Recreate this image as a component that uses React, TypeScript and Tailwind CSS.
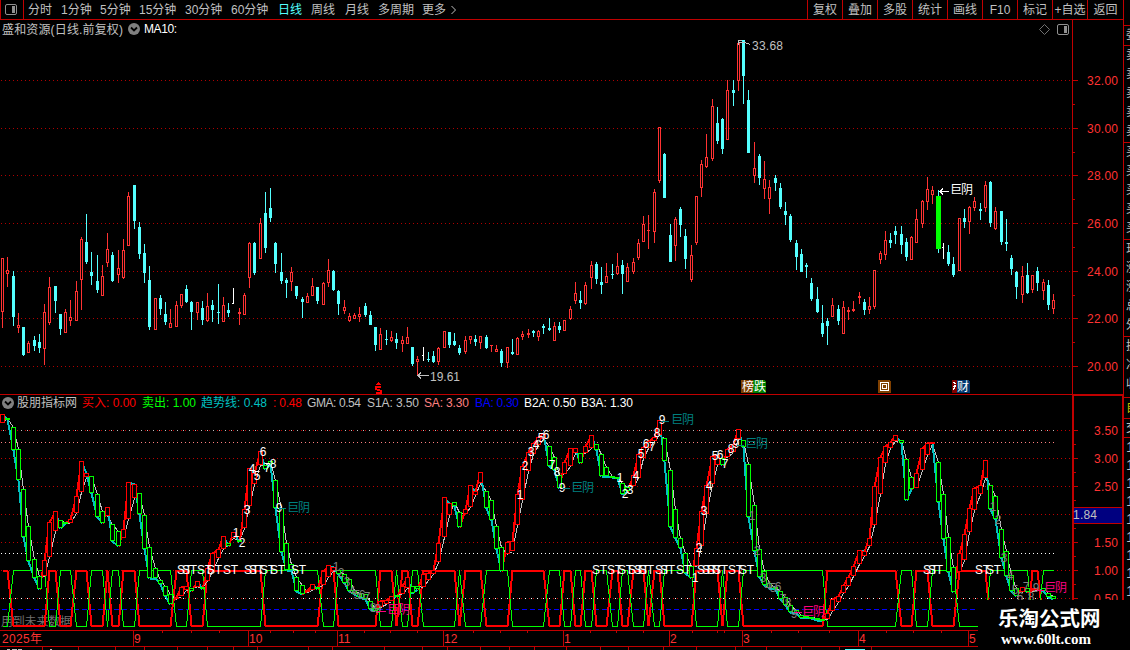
import { Fragment } from 'react';

type Candle = [high: number, top: number, bottom: number, low: number];
type Bar = [kind: 'r' | 'g', top: number, bottom: number];

const STEP = 5.2549;
const px = (i: number) => Math.floor(2.639 + i * STEP);

// Daily candles: kind, high, body top, body bottom, low (screen y)
const candleData = `
r258,258,312,328 r257,270,274,287 c271,276,317,326 r313,325,328,333 c327,327,355,356 r341,343,353,353
c336,340,346,351 c334,342,348,353 r304,312,349,365 r277,287,323,325 c286,286,301,313 c314,314,329,335
r309,312,333,333 r300,317,321,326 r281,291,321,321 r237,239,280,310 c214,242,262,264 c252,272,276,285
c255,281,290,293 r265,276,296,296 r233,249,263,267 c252,255,281,282 r250,268,275,283 r239,250,278,279
r192,196,246,246 c185,185,221,229 c222,227,254,259 c244,253,273,283 c266,280,327,330 r298,298,330,330
c295,298,309,315 c302,314,322,325 r309,323,328,328 r301,305,327,327 r294,294,306,308 c285,289,302,303
c301,302,312,330 r302,302,313,320 c301,308,320,325 r293,306,321,322 c300,305,310,322 c284,312,313,324
r297,305,322,322 c303,310,313,317 w288,303,304,304 r308,312,314,325 r293,295,315,315 r242,243,278,288
c242,243,273,275 r218,223,259,259 c192,213,248,253 c188,208,218,222 c242,243,264,273 c253,272,281,284
c278,280,283,298 r267,272,282,291 c286,286,296,299 c297,299,302,318 r293,296,303,303 r278,286,296,296
c287,287,301,304 r282,283,305,305 r259,270,283,287 c270,271,290,291 c290,291,304,315 r300,307,311,314
r313,316,321,322 r313,315,319,319 r307,314,317,322 c303,306,315,317 c311,315,325,325 c327,327,345,351
r328,334,350,350 c330,339,340,345 r331,337,341,342 c333,339,343,349 r336,340,344,352 r327,337,344,344
c347,347,364,366 r356,359,362,375 w347,355,356,361 c352,359,360,362 c351,356,362,363 r347,348,362,365
r331,331,348,348 c332,332,345,348 c333,341,345,346 c345,348,353,355 r336,340,352,354 r336,336,340,344
c335,339,342,346 r336,336,343,349 c335,337,348,349 r345,345,346,352 r345,349,352,352 c349,351,363,367
r347,347,363,368 c339,352,354,355 r337,338,355,355 r331,334,337,340 r329,333,335,338 c330,331,333,337
r330,331,337,341 c324,326,328,334 c318,328,330,331 r322,326,341,341 c322,326,330,333 r320,320,331,331
r306,309,319,320 r282,293,301,304 c291,300,303,309 r282,285,304,305 r261,265,278,289 c262,264,279,284
c267,282,285,294 r263,276,283,283 c264,274,275,279 r253,266,274,275 c260,265,274,294 r263,267,282,282
r258,262,272,274 r239,243,258,260 r216,224,242,242 r215,230,231,249 r189,192,232,243 r127,127,181,183
c153,154,198,198 c224,235,262,262 r217,219,246,261 c207,209,225,237 c229,236,259,269 r245,255,280,282
r196,196,243,245 r160,164,188,197 r134,157,167,168 r99,106,159,161 c107,123,141,144 c118,119,149,154
r80,90,140,140 c80,90,93,106 r42,43,81,91 c40,40,76,104 c90,100,153,153 r142,168,176,183
c154,156,178,185 r161,179,189,199 r180,187,199,214 c175,178,183,191 c183,188,207,209 c202,211,215,225
c214,216,240,242 c240,243,257,270 c249,254,272,272 c263,265,267,278 c278,283,299,301 c287,299,312,313
c305,323,334,337 c318,321,326,345 r298,305,317,317 c305,309,321,325 r301,307,334,334 r307,310,312,320
r301,309,311,312 r292,296,298,304 c299,302,310,315 r297,306,310,314 r270,270,307,309 r251,253,260,264
r231,240,255,260 c233,240,243,248 c226,231,235,244 c226,234,245,254 c238,242,257,261 r236,237,260,260
r209,219,243,243 r200,201,224,228 r177,189,202,210 r186,190,195,204 x190,196,249,253 w243,247,248,259
c245,252,264,266 c257,264,275,277 r218,218,271,271 c209,218,222,228 r206,207,222,234 r197,201,208,211
c203,209,211,220 r181,185,208,212 c181,182,223,227 r207,211,229,230 c211,211,242,245 c219,242,244,251
c255,258,269,275 c271,272,287,299 r266,276,295,303 c263,275,293,294 r275,275,290,293 c267,271,283,291
r279,282,291,300 c280,285,305,310 r294,300,309,314`;

const candles = candleData
    .trim()
    .split(/\s+/)
    .map((s) => ({ kind: s[0], v: s.slice(1).split(',').map(Number) as Candle }));

// Trend boxes: kind, top, bottom
const barData = `
r414,423 g418,419 g427,450 g449,480 g489,537 g526,561 g559,578 g576,589 r560,576 r522,557 r511,531 g520,528
g522,523 r519,523 r496,513 r461,492 r473,477 g476,493 g494,517 g511,523 r507,516 g524,541 g531,546 r529,538
r482,519 r484,498 g493,514 g515,549 g547,578 g568,578 g580,584 g586,596 g594,604 r597,599 r587,596 r586,590
g588,591 r581,587 g587,589 r568,581 r553,571 r549,558 r536,549 g543,546 r532,538 g540,542 r509,528 r468,506
r473,484 r451,465 g465,469 g461,464 g480,508 g508,552 g543,570 g564,570 g577,591 g585,594 r590,592 r584,590
g587,589 r571,585 r565,577 r567,571 g570,574 g574,583 g579,591 g590,594 g593,597 g594,599 g601,609 g608,611
r601,607 r600,604 r596,601 g595,597 r586,594 r577,588 g586,593 g586,589 r574,587 r573,580 r570,574 r543,562
r497,537 r503,515 g502,506 g512,527 r509,514 r485,507 r491,495 r472,483 g491,508 g500,520 g526,549 g547,571
r542,554 r541,551 r494,525 r466,500 r452,471 r443,454 r437,445 r434,439 g446,466 g457,470 g475,488 r462,474
r448,466 r448,453 g453,463 r446,453 r435,448 g444,450 g454,476 g467,476 g476,477 g477,478 g483,494 g487,491
r475,486 r454,478 r447,458 r441,448 r437,441 r420,435 g438,461 g470,527 g509,538 g538,548 g553,573 g566,578
r548,566 r511,546 r485,514 r456,484 r455,465 g458,465 r449,457 r444,452 r429,439 g440,447 g464,517 g505,551
g549,577 g571,585 g583,588 g587,589 g591,599 g597,605 g605,612 g610,613 g615,618 g616,617 g617,618 g618,620
g619,621 r613,619 r599,611 r596,602 r585,593 r577,586 r566,576 r550,564 r551,556 r538,546 r486,525 r457,494
r446,463 r442,448 r435,441 g440,443 g459,500 g477,489 r473,488 r448,470 r443,455 r442,444 g462,502 g494,539
g537,572 g567,592 r553,572 r534,560 r508,532 r488,510 r485,494 r460,478 g485,509 g496,519 g529,558 g551,576
g575,591 g588,596 r587,592 g588,592 r589,591 r588,590 g588,591 g593,597 g596,599`;

const bars = barData
    .trim()
    .split(/\s+/)
    .map((s) => [s[0], ...s.slice(1).split(',').map(Number)] as Bar);

const fast = bars.map(([k, t, b]) => (k === 'r' ? t : b));
const slow = bars.map(([k, t, b]) => (k === 'r' ? b : t));

// Index ranges in which the signal line is high
const highRanges = [
    [0, 1], [9, 10], [14, 16], [20, 20], [23, 25], [33, 35], [39, 49], [61, 63], [72, 74], [76, 77],
    [80, 86], [88, 91], [97, 103], [107, 108], [111, 112], [116, 117], [120, 122], [124, 125],
    [132, 136], [138, 140], [157, 170], [174, 176], [182, 187], [196, 197],
];
const isHigh = (i: number) => highRanges.some(([a, b]) => i >= a && i <= b);
const signal = (hi: number, lo: number) =>
    bars.map((_, i) => `${px(i) + 0.5},${isHigh(i) ? hi : lo}`).join(' ');

const priceTicks = [
    ['32.00', 80], ['30.00', 128], ['28.00', 175], ['26.00', 223], ['24.00', 271], ['22.00', 318], ['20.00', 366],
] as [string, number][];

const trendTicks = [
    ['3.50', 430], ['3.00', 458], ['2.50', 486], ['', 514], ['1.50', 542], ['1.00', 570], ['0.50', 598],
] as [string, number][];

// Counters: text, centre x, centre y
const whiteCounts = `1,236,532 2,242,542 3,247,509 4,252,468 5,257,475 6,263,451 7,267,467 8,273,463 9,279,507
1,520,494 2,525,465 3,531,451 4,536,444 5,541,437 6,546,434 7,552,464 8,557,471 9,562,487
1,620,477 2,625,493 3,630,489 4,636,475 5,641,453 6,646,443 7,652,446 8,657,432 9,662,419
1,695,577 2,699,547 3,704,510 4,709,485 5,715,455 6,720,454 7,725,463 8,731,448 9,736,443`;
const grayCounts = `1,336,566 2,341,572 3,347,581 4,352,590 5,357,594 6,362,594 7,367,596 8,373,607 9,378,608
1,752,515 2,757,550 3,763,577 4,768,585 5,773,587 6,778,586 7,783,598 8,788,602 9,794,613
1,993,506 2,998,519 3,1004,557 4,1010,575 5,1015,589 6,1020,596 7,1026,586 8,1031,596 9,1036,587`;

const stMarks = [
    177, 182, 197, 207, 223, 244, 249, 260, 270, 291, 592, 607, 618, 628, 634, 639, 655, 660, 676, 697, 702,
    707, 713, 728, 739, 923, 928, 975, 986,
];

const periods = [
    ['分时', 'w-[33px]'], ['1分钟', 'w-[39px]'], ['5分钟', 'w-[39px]'], ['15分钟', 'w-[46px]'],
    ['30分钟', 'w-[46px]'], ['60分钟', 'w-[47px]'], ['日线', 'w-[33px] text-[#54ffff]'], ['周线', 'w-[34px]'],
    ['月线', 'w-[33px]'], ['多周期', 'w-[44px]'], ['更多', 'w-[28px]'],
];

const actions = ['复权', '叠加', '多股', '统计', '画线', 'F10', '标记', '+自选', '返回'];

const readings = [
    ['买入: 0.00', 'w-[60px] text-[#ff0000]', 54],
    ['卖出: 1.00', 'w-[59px] text-[#00ff00]', 54],
    ['趋势线: 0.48', 'w-[72px] text-[#00c0c0]', 66],
    [': 0.48', 'w-[34px] text-[#ff0000]', 29],
    ['GMA: 0.54', 'w-[60px] text-[#c0c0c0]', 54],
    ['S1A: 3.50', 'w-[57px] text-[#c0c0c0]', 52],
    ['SA: 3.30', 'w-[51px] text-[#ff8080]', 45],
    ['BA: 0.30', 'w-[49px] text-[#0000ff]', 44],
    ['B2A: 0.50', 'w-[57px] text-white', 52],
    ['B3A: 1.30', 'w-[57px] text-white', 52],
] as [string, string, number][];

const months = [
    ['9', 133], ['10', 248], ['11', 337], ['12', 443], ['1', 563], ['2', 669], ['3', 742], ['4', 858], ['5', 968],
] as [string, number][];
const minorTicks = [162, 191, 219, 270, 293, 315, 364, 390, 417, 473, 500, 527, 590, 616, 643, 692, 717, 724, 771, 798, 829, 886, 913, 941];
const footTicks = [42, 78, 115, 144, 177, 207, 233, 257, 308, 332, 384, 422, 447, 480, 509, 534, 566, 600, 628, 663, 696, 735, 766, 801, 839, 871];

function Label({ x, y, w, fill, size = 12, children }: { x: number; y: number; w?: number; fill: string; size?: number; children: string }) {
    return (
        <text x={x} y={y} fill={fill} fontSize={size} textLength={w} lengthAdjust="spacing">
            {children}
        </text>
    );
}

function Dots({ y, color, end = 1071 }: { y: number; color: string; end?: number }) {
    return <line x1="1" x2={end} y1={y + 0.5} y2={y + 0.5} stroke={color} strokeDasharray="1 3" />;
}

function ChevronBadge() {
    return (
        <svg width="12" height="12" viewBox="0 0 12 12" className="shrink-0">
            <circle cx="6" cy="6" r="6" fill="#808080" />
            <path d="M3 4.5l3 3 3-3" fill="none" stroke="#000" strokeWidth="1.8" />
        </svg>
    );
}

function PanelIcon() {
    return (
        <svg width="12" height="11" viewBox="0 0 12 11" className="shrink-0">
            <rect x=".5" y=".5" width="11" height="10" rx="1.5" fill="none" stroke="#909090" />
            <rect x="7" y="2" width="3" height="7" fill="#909090" />
        </svg>
    );
}

function PriceChart() {
    return (
        <svg width="1123" height="356" viewBox="0 38 1123 356" className="block shrink-0" shapeRendering="crispEdges">
            {priceTicks.map(([t, y], i) => (
                <Fragment key={t}>
                    <Dots y={y} color="#b00000" />
                    <rect x="1073" y={y} width="5" height="1" fill="#c00000" />
                    {i < 6 && <rect x="1073" y={y + 24} width="2" height="1" fill="#c00000" />}
                    <Label x={1087} y={y + 5} w={31} fill="#ff3232">{t}</Label>
                </Fragment>
            ))}
            <rect x="1072" y="38" width="1" height="356" fill="#c00000" />
            {candles.map(({ kind, v: [high, top, bot, low] }, i) => {
                const x = px(i);
                if (kind === 'w') {
                    return (
                        <g key={i} fill="#fff">
                            <rect x={x} y={high} width="1" height={low - high} />
                            <rect x={x - 1} y={top} width="1" height="1" />
                        </g>
                    );
                }
                if (kind === 'r') {
                    const h = Math.max(bot - top, 1);
                    return (
                        <g key={i} fill="#ff3232">
                            <rect x={x} y={high} width="1" height={Math.max(low, bot) - high} />
                            <rect x={x - 1} y={top} width="3" height={h} />
                            {h > 2 && <rect x={x} y={top + 1} width="1" height={h - 2} fill="#000" />}
                        </g>
                    );
                }
                return (
                    <g key={i} fill="#54ffff">
                        <rect x={x} y={high} width="1" height={Math.max(low, bot) - high} />
                        {kind === 'x' ? (
                            <rect x={x - 2} y={top} width="5" height={bot - top} fill="#00ff00" />
                        ) : (
                            <rect x={x - 1} y={top} width="3" height={bot - top} />
                        )}
                    </g>
                );
            })}
            <path d="M738.5 45v-5h3m-3 2h5l7 2.5" fill="none" stroke="#c0c0c0" />
            <Label x={752} y={50} w={31} fill="#c0c0c0">33.68</Label>
            <path d="M417 375.5h12m-8-3l-3 3l3 3" fill="none" stroke="#c0c0c0" />
            <Label x={430} y={381} w={30} fill="#c0c0c0">19.61</Label>
            <path d="M939 191.5h10m-6-3l-3 3l3 3" fill="none" stroke="#fff" />
            <Label x={950} y={194} w={23} fill="#fff">巨阴</Label>
            <path d="M378 382h1v1h1v1h1v1h-5v-1h1v-1h1z" fill="#ff0000" />
            <path d="M381 387h-5v2.500l5 1v2.500h-5" fill="none" stroke="#ff0000" strokeWidth="1.500" />
            <path d="M741 380h11l2 2v11h-13z" fill="#804000" />
            <path d="M753 380h12l1 2v11h-13z" fill="#008000" />
            <path d="M878 380h11l2 2v11h-13z" fill="#804000" />
            <path d="M952 380h6v13h-6z" fill="#800000" />
            <path d="M957 380h11l2 2v11h-13z" fill="#003870" />
            <Label x={742} y={391} fill="#fff">榜跌</Label>
            <path d="M880.500 382.500h8v8h-8zM882.500 384.500h4v4h-4z" fill="none" stroke="#fff" />
            <path d="M953 382l3 2m-3 3l3-2m-3 5l3-4" fill="none" stroke="#fff" />
            <Label x={957} y={391} fill="#fff">财</Label>
        </svg>
    );
}

function TrendChart() {
    return (
        <svg width="1123" height="219" viewBox="0 411 1123 219" className="block shrink-0" shapeRendering="crispEdges">
            {trendTicks.map(([t, y], i) => (
                <Fragment key={y}>
                    <Dots y={y} color="#c00000" />
                    <rect x="1074" y={y} width="4" height="1" fill="#c00000" />
                    {i < 6 && <rect x="1074" y={y + 14} width="2" height="1" fill="#c00000" />}
                    {t && <Label x={1094} y={y + 5} w={24} fill="#ff3232">{t}</Label>}
                </Fragment>
            ))}
            <line x1="3" x2="1054" y1="430.500" y2="430.500" stroke="#c0c0c0" strokeDasharray="1 5" />
            <Dots y={442} color="#ff8080" end={1054} />
            <Dots y={553} color="#fff" end={1054} />
            <line x1="3" x2="1054" y1="598.500" y2="598.500" stroke="#fff" strokeDasharray="1 5" />
            <line x1="2" x2="1054" y1="609.500" y2="609.500" stroke="#0000ff" strokeDasharray="5 3" />
            <rect x="1072" y="411" width="2" height="219" fill="#c00000" />
            <text x="1" y="626" fill="#707070" fontSize="12" textLength="71">用到未来数据</text>

            <polyline points={signal(570.5, 626)} fill="none" stroke="#ff0000" strokeWidth="2" />
            <polyline points={signal(626.5, 570.5)} fill="none" stroke="#00ff00" />

            {bars.slice(1).map((_, i) => {
                const x1 = px(i) + 0.5;
                const x2 = px(i + 1) + 0.5;
                const up = bars[i + 1][0] === 'r' && fast[i + 1] < fast[i];
                return (
                    <g key={i}>
                        <line x1={x1} y1={slow[i] + 0.5} x2={x2} y2={slow[i + 1] + 0.5} stroke="#c0c0c0" />
                        <line x1={x1} y1={fast[i] + 0.5} x2={x2} y2={fast[i + 1] + 0.5} stroke={up ? '#ff0000' : '#00c0c0'} strokeWidth="2" />
                    </g>
                );
            })}
            {bars.map(([k, top, bot], i) => (
                <rect
                    key={i}
                    x={px(i) - 1.5}
                    y={top + 0.5}
                    width="4"
                    height={Math.max(bot - top - 1, 1)}
                    fill="#000"
                    stroke={k === 'r' ? '#ff0000' : '#00ff00'}
                />
            ))}

            {[whiteCounts, grayCounts].map((group, g) =>
                group.split(/\s+/).map((s) => {
                    const [t, x, y] = s.split(',');
                    return (
                        <text key={s} x={x} y={Number(y) + 4.5} fill={g ? '#808080' : '#fff'} fontSize="12" textAnchor="middle">
                            {t}
                        </text>
                    );
                }),
            )}
            {stMarks.map((x) => (
                <Label key={x} x={x} y={574} w={15} fill="#fff">ST</Label>
            ))}

            <path d="M279 508.500h7M563 488.500h7M661 421.500h8M737 445.500h7" stroke="#008080" />
            <path d="M377 611.500h9M794 612.500h8M1037 590.500h7" stroke="#ff0080" />
            <Label x={287} y={512} w={23} fill="#008080">巨阴</Label>
            <Label x={571} y={492} w={23} fill="#008080">巨阴</Label>
            <Label x={671} y={424} w={23} fill="#008080">巨阴</Label>
            <Label x={745} y={448} w={23} fill="#008080">巨阴</Label>
            <Label x={387} y={614} w={23} fill="#ff0080">巨阴</Label>
            <Label x={802} y={616} w={23} fill="#ff0080">巨阴</Label>
            <Label x={1044} y={592} w={23} fill="#ff0080">巨阴</Label>

            <rect x="1073" y="507" width="49" height="17" fill="#c00000" />
            <rect x="1074" y="508" width="48" height="15" fill="#000080" />
            <Label x={1073} y={519} w={24} fill="#c0c0c0">1.84</Label>
        </svg>
    );
}

function TimeAxis() {
    return (
        <svg width="1123" height="20" viewBox="0 630 1123 20" className="block shrink-0" shapeRendering="crispEdges">
            <rect x="0" y="630" width="1123" height="1" fill="#c00000" />
            <rect x="0" y="646" width="1123" height="1" fill="#c00000" />
            <Label x={2} y={643} w={40} fill="#ff3232">2025年</Label>
            {months.map(([t, x]) => (
                <Fragment key={x}>
                    <rect x={x} y="631" width="1" height="15" fill="#c00000" />
                    <Label x={x + 1} y={643} fill="#ff3232">{t}</Label>
                </Fragment>
            ))}
            {minorTicks.map((x) => (
                <rect key={x} x={x} y="631" width="1" height="2" fill="#c00000" />
            ))}
            {footTicks.map((x) => (
                <rect key={x} x={x} y="647" width="1" height="3" fill="#c00000" />
            ))}
            <path d="M7 649.500h3m2 0h5m1 0h4m28 0h2" stroke="#c0c0c0" />
            <path d="M845 649.500h20" stroke="#54ffff" />
        </svg>
    );
}

const sideCells = [
    ['h-[26px]', ''],
    ['h-[20px] leading-[19px]', '委'],
    ['h-[97px] leading-[19px]', '卖卖卖卖卖'],
    ['h-[97px] leading-[19px]', '买买买买买'],
    ['h-[97px] leading-[19px]', '现涨涨总外'],
    ['h-[61px] leading-[19px]', '换净收'],
    ['h-[21px] leading-[20px] text-[#c0c000]', '自'],
    ['h-[19px] leading-[18px]', '交'],
    ['h-[163px] leading-[18px] text-[15px]', '111111111'],
];

// Only a sliver of the quote table is visible at the window edge
function QuoteStrip() {
    return (
        <div className="flex w-[7px] shrink-0 flex-col overflow-hidden border-l border-[#c00000] text-[#c0c0c0]">
            {sideCells.map(([cls, text], i) => (
                <div key={i} className={`${cls} shrink-0 overflow-hidden border-b border-[#c00000] pl-[2px]`}>
                    {text.split('').map((ch, n) => (
                        <div key={n} className="w-4">{ch}</div>
                    ))}
                </div>
            ))}
        </div>
    );
}

export default function App() {
    return (
        <div className="relative flex h-[650px] w-[1130px] flex-col overflow-hidden bg-black font-['Liberation_Sans','Noto_Sans_CJK_SC',sans-serif] text-[12px] leading-none whitespace-nowrap text-[#c0c0c0]">
            <div className="flex min-h-0 flex-1">
                <div className="flex w-[1123px] shrink-0 flex-col">
                    <div className="flex h-5 shrink-0 items-stretch border-b border-[#c00000]">
                        <div className="flex w-6 items-center border-x border-[#c00000] pb-[1px] pl-1">
                            <PanelIcon />
                        </div>
                        <div className="flex flex-1 items-center pl-1">
                            {periods.map(([name, cls]) => (
                                <span key={name} className={cls}>{name}</span>
                            ))}
                            <svg width="7" height="10" viewBox="0 0 7 10">
                                <path d="M1.500 1l4 4l-4 4" fill="none" stroke="#c0c0c0" />
                            </svg>
                        </div>
                        <div className="flex">
                            {actions.map((name) => (
                                <div key={name} className="flex w-[35px] items-center justify-center border-l border-[#c00000] last:w-[36px]">
                                    {name}
                                </div>
                            ))}
                        </div>
                    </div>

                    <div className="flex h-[18px] w-[1073px] shrink-0 items-center border-r border-[#c00000] pl-[2px]">
                        <svg width="121" height="18">
                            <text x="0" y="13.500" fill="#c0c0c0" fontSize="12" textLength="121">盛和资源(日线.前复权)</text>
                        </svg>
                        <span className="ml-[5px]"><ChevronBadge /></span>
                        <svg width="34" height="18" className="ml-1">
                            <text x="0" y="13" fill="#fff" fontSize="12" textLength="33">MA10:</text>
                        </svg>
                        <div className="ml-auto flex items-center gap-[7px] pr-[3px]">
                            <svg width="11" height="11" viewBox="0 0 11 11">
                                <path d="M5.500 .5l5 5l-5 5l-5-5z" fill="none" stroke="#707070" />
                            </svg>
                            <PanelIcon />
                        </div>
                    </div>
                    <PriceChart />

                    <div className="flex h-[17px] shrink-0 border-t border-[#c00000]">
                        <div className="flex w-[1072px] items-center pl-[2px]">
                            <ChevronBadge />
                            <span className="ml-[3px] w-[65px]">股朋指标网</span>
                            {readings.map(([text, cls, w]) => (
                                <span key={text} className={cls}>
                                    <svg width={w} height="16" className="block overflow-visible">
                                        <text x="0" y="12" fill="currentColor" fontSize="12" textLength={w}>{text}</text>
                                    </svg>
                                </span>
                            ))}
                        </div>
                        <div className="w-[51px] border-t border-l-2 border-[#c00000]" />
                    </div>
                    <TrendChart />
                    <TimeAxis />
                </div>
                <QuoteStrip />
            </div>

            <div className="absolute right-0 bottom-0 flex h-[50px] w-[152px] flex-col items-start bg-black pt-[8px] pl-5 font-bold text-white">
                <div className="text-[20.500px] leading-[21px]">乐淘公式网</div>
                <div className="mt-[2px] pl-[3px] font-['Liberation_Serif',serif] text-[15px] leading-[16px]">www.60lt.com</div>
            </div>
            <div className="absolute top-[395px] left-[1122px] h-[205px] w-[2px] bg-[#c00000]" />
        </div>
    );
}
